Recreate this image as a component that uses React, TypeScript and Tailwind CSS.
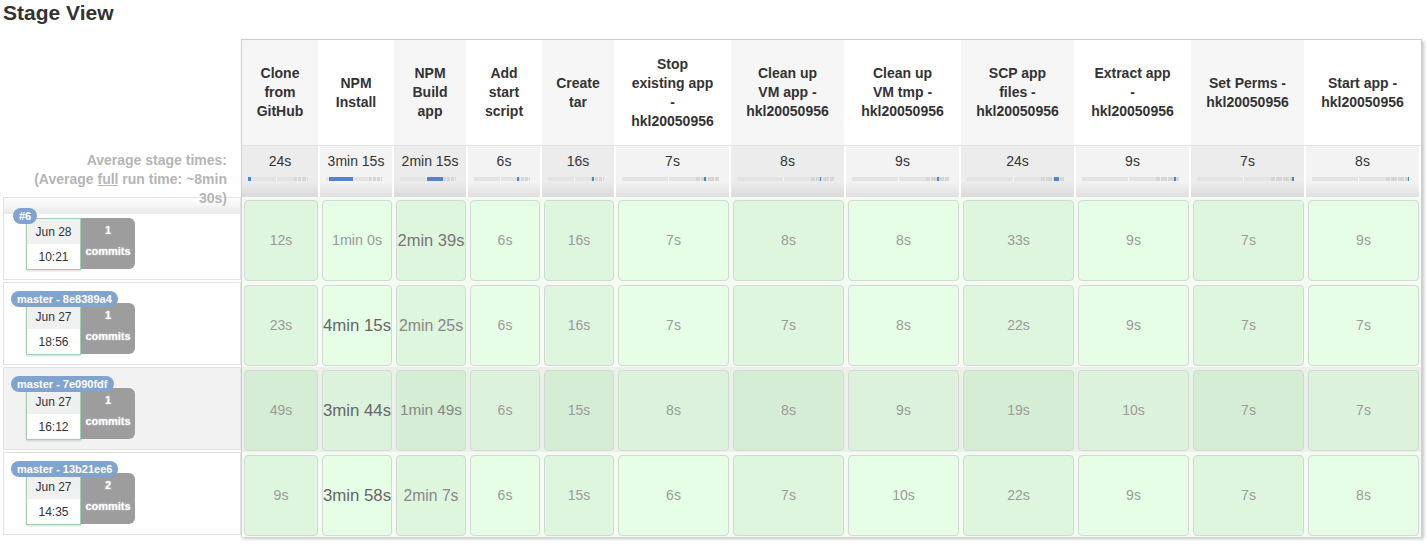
type Stage = { lines: string[]; avg: string; w: string; bar: [number, number] };

const stages: Stage[] = [
  { lines: ["Clone", "from", "GitHub"], avg: "24s", w: "w-[78px]", bar: [0, 5] },
  { lines: ["NPM", "Install"], avg: "3min 15s", w: "w-[74px]", bar: [5, 43] },
  { lines: ["NPM", "Build", "app"], avg: "2min 15s", w: "w-[74px]", bar: [48, 29] },
  { lines: ["Add", "start", "script"], avg: "6s", w: "w-[74px]", bar: [77.5, 2] },
  { lines: ["Create", "tar"], avg: "16s", w: "w-[74px]", bar: [79, 3] },
  { lines: ["Stop", "existing app", "-", "hkl20050956"], avg: "7s", w: "w-[115px]", bar: [84.5, 2] },
  { lines: ["Clean up", "VM app -", "hkl20050956"], avg: "8s", w: "w-[115px]", bar: [85.7, 1] },
  { lines: ["Clean up", "VM tmp -", "hkl20050956"], avg: "9s", w: "w-[115px]", bar: [87.8, 2] },
  { lines: ["SCP app", "files -", "hkl20050956"], avg: "24s", w: "w-[115px]", bar: [89.8, 5] },
  { lines: ["Extract app", "-", "hkl20050956"], avg: "9s", w: "w-[115px]", bar: [95, 2] },
  { lines: ["Set Perms -", "hkl20050956"], avg: "7s", w: "w-[115px]", bar: [97.5, 2] },
  { lines: ["Start app -", "hkl20050956"], avg: "8s", w: "w-[115px]", bar: [99, 1] },
];

const s = "text-[14px] text-[#9b9b9b]";
const big = "text-[16.8px] text-[#666]";

const rows: [string, string][][] = [
  [["12s", s], ["1min 0s", "text-[14.3px] text-[#999]"], ["2min 39s", "text-[16.5px] text-[#777]"], ["6s", s], ["16s", s], ["7s", s], ["8s", s], ["8s", s], ["33s", s], ["9s", s], ["7s", s], ["9s", s]],
  [["23s", s], ["4min 15s", big], ["2min 25s", "text-[15.8px] text-[#888]"], ["6s", s], ["16s", s], ["7s", s], ["7s", s], ["8s", s], ["22s", s], ["9s", s], ["7s", s], ["7s", s]],
  [["49s", s], ["3min 44s", big], ["1min 49s", "text-[15.3px] text-[#888]"], ["6s", s], ["15s", s], ["8s", s], ["8s", s], ["9s", s], ["19s", s], ["10s", s], ["7s", s], ["7s", s]],
  [["9s", s], ["3min 58s", big], ["2min 7s", "text-[15.7px] text-[#888]"], ["6s", s], ["15s", s], ["6s", s], ["7s", s], ["10s", s], ["22s", s], ["9s", s], ["7s", s], ["8s", s]],
];

const builds = [
  { badge: "#6", date: "Jun 28", time: "10:21", commits: "1", badgePos: "left-[9px] top-[10px]" },
  { badge: "master - 8e8389a4", date: "Jun 27", time: "18:56", commits: "1", badgePos: "left-[7px] top-[8px]" },
  { badge: "master - 7e090fdf", date: "Jun 27", time: "16:12", commits: "1", badgePos: "left-[7px] top-[8px]" },
  { badge: "master - 13b21ee6", date: "Jun 27", time: "14:35", commits: "2", badgePos: "left-[7px] top-[8px]" },
];

function Bar({ bar }: { bar: [number, number] }) {
  return (
    <div className="relative ml-[6px] mr-[10px] mt-[6px] h-[4px] flex">
      <div className="w-[47%] bg-[#e3e3e3]" />
      <div className="w-[1px] bg-[#f7f7f7]" />
      <div className="w-[28%] bg-[#e3e3e3]" />
      <div className="flex-1 flex bg-[#d6d6d6]">
        <div className="w-[20%]" />
        <div className="w-[1px] bg-[#ececec]" />
        <div className="w-[25%]" />
        <div className="w-[1px] bg-[#ececec]" />
        <div className="w-[25%]" />
        <div className="w-[1px] bg-[#ececec]" />
      </div>
      <div
        className="absolute top-0 h-full min-w-[1px] bg-[#4f84d1]"
        style={{ left: `${bar[0]}%`, width: `${bar[1]}%` }}
      />
    </div>
  );
}

function BuildCell({ b, i }: { b: (typeof builds)[number]; i: number }) {
  return (
    <div className="h-[85px] pb-[2px]">
      <div className={`relative ml-[3px] h-full border border-[#e3e3e3] ${i === 2 ? "bg-[#f2f2f2]" : "bg-white"}`}>
        {i === 0 && <div className="h-[16px] bg-linear-to-b from-white to-[#e9e9e9]" />}
        <div className={`flex ml-[22px] ${i === 0 ? "mt-[4px]" : "mt-[20px]"}`}>
          <div className="w-[55px] h-[52px] flex flex-col border border-[#9fceb0] bg-white shadow-[0_1px_2px_rgba(0,0,0,0.15)] text-[12px] text-[#333]">
            <div className="h-[25px] flex items-center justify-center bg-[#f0f0f0]">{b.date}</div>
            <div className="flex-1 flex items-center justify-center">{b.time}</div>
          </div>
          <div className="w-[54px] h-[51px] flex flex-col items-center pt-[2px] rounded-r-[6px] bg-[#9d9d9d] text-white font-bold text-[11px] leading-[21px] [text-shadow:0_0_2px_rgba(255,255,255,0.6)]">
            <div>{b.commits}</div>
            <div>commits</div>
          </div>
        </div>
        <div className={`absolute ${b.badgePos} h-[16px] px-[6px] rounded-full bg-[#80a4d0] text-white font-bold text-[11px] leading-[16px] whitespace-nowrap`}>
          {b.badge}
        </div>
      </div>
    </div>
  );
}

export default function App() {
  return (
    <div className="font-['Liberation_Sans',Arial,sans-serif] bg-white w-[1426px] h-[545px]">
      <h2 className="pl-[3px] pt-[1px] text-[21px] leading-[24px] font-bold text-[#333]">Stage View</h2>
      <div className="flex mt-[14px]">
        <div className="w-[241px]">
          <div className="h-[106px]" />
          <div className="relative z-10 h-[52px] pt-[6px] pr-[14px] flex flex-col items-end text-right font-bold text-[14px] leading-[19px] text-[#b5b5b5]">
            <div>Average stage times:</div>
            <div className="w-[205px]">
              (Average <span className="underline">full</span> run time: ~8min 30s)
            </div>
          </div>
          {builds.map((b, i) => (
            <BuildCell key={i} b={b} i={i} />
          ))}
        </div>

        <div className="border-l border-t border-r border-[#cfcfcf] shadow-[2px_2px_3px_rgba(0,0,0,0.22)]">
          <div className="flex">
            {stages.map((st, i) => (
              <div
                key={i}
                className={`${st.w} h-[105px] flex flex-col items-center justify-center text-center font-bold text-[14px] leading-[19px] text-[#333] whitespace-nowrap border-r-2 border-white ${i % 2 === 0 ? "bg-[#f6f6f6]" : "bg-white"}`}
              >
                {st.lines.map((l, j) => (
                  <div key={j}>{l}</div>
                ))}
              </div>
            ))}
          </div>
          <div className="flex border-t border-[#e2e2e2]">
            {stages.map((st, i) => (
              <div
                key={i}
                className={`${st.w} h-[51px] pt-[6px] border-r-2 border-white bg-linear-to-b from-70% ${i % 2 === 0 ? "from-[#ececec] to-[#dadada]" : "from-[#f3f3f3] to-[#e0e0e0]"}`}
              >
                <div className="text-center text-[14px] leading-[19px] text-[#333] whitespace-nowrap">{st.avg}</div>
                <Bar bar={st.bar} />
              </div>
            ))}
          </div>
          {rows.map((row, r) => (
            <div key={r} className={`flex ${r === 2 ? "bg-[#e9f1e9]" : "bg-[#f3fbf3]"}`}>
              {row.map(([t, cls], i) => (
                <div key={i} className={`${stages[i].w} h-[85px] px-[2px] pt-[3px] pb-[1px]`}>
                  <div
                    className={`h-full flex items-center justify-center rounded-[4px] border border-[#d3dad3] whitespace-nowrap ${cls} ${
                      r === 2
                        ? i % 2 === 0
                          ? "bg-[#d5ecd5]"
                          : "bg-[#dcf2dc]"
                        : i % 2 === 0
                          ? "bg-[#def5de]"
                          : "bg-[#e6fde6]"
                    }`}
                  >
                    {t}
                  </div>
                </div>
              ))}
            </div>
          ))}
        </div>
      </div>
    </div>
  );
}
